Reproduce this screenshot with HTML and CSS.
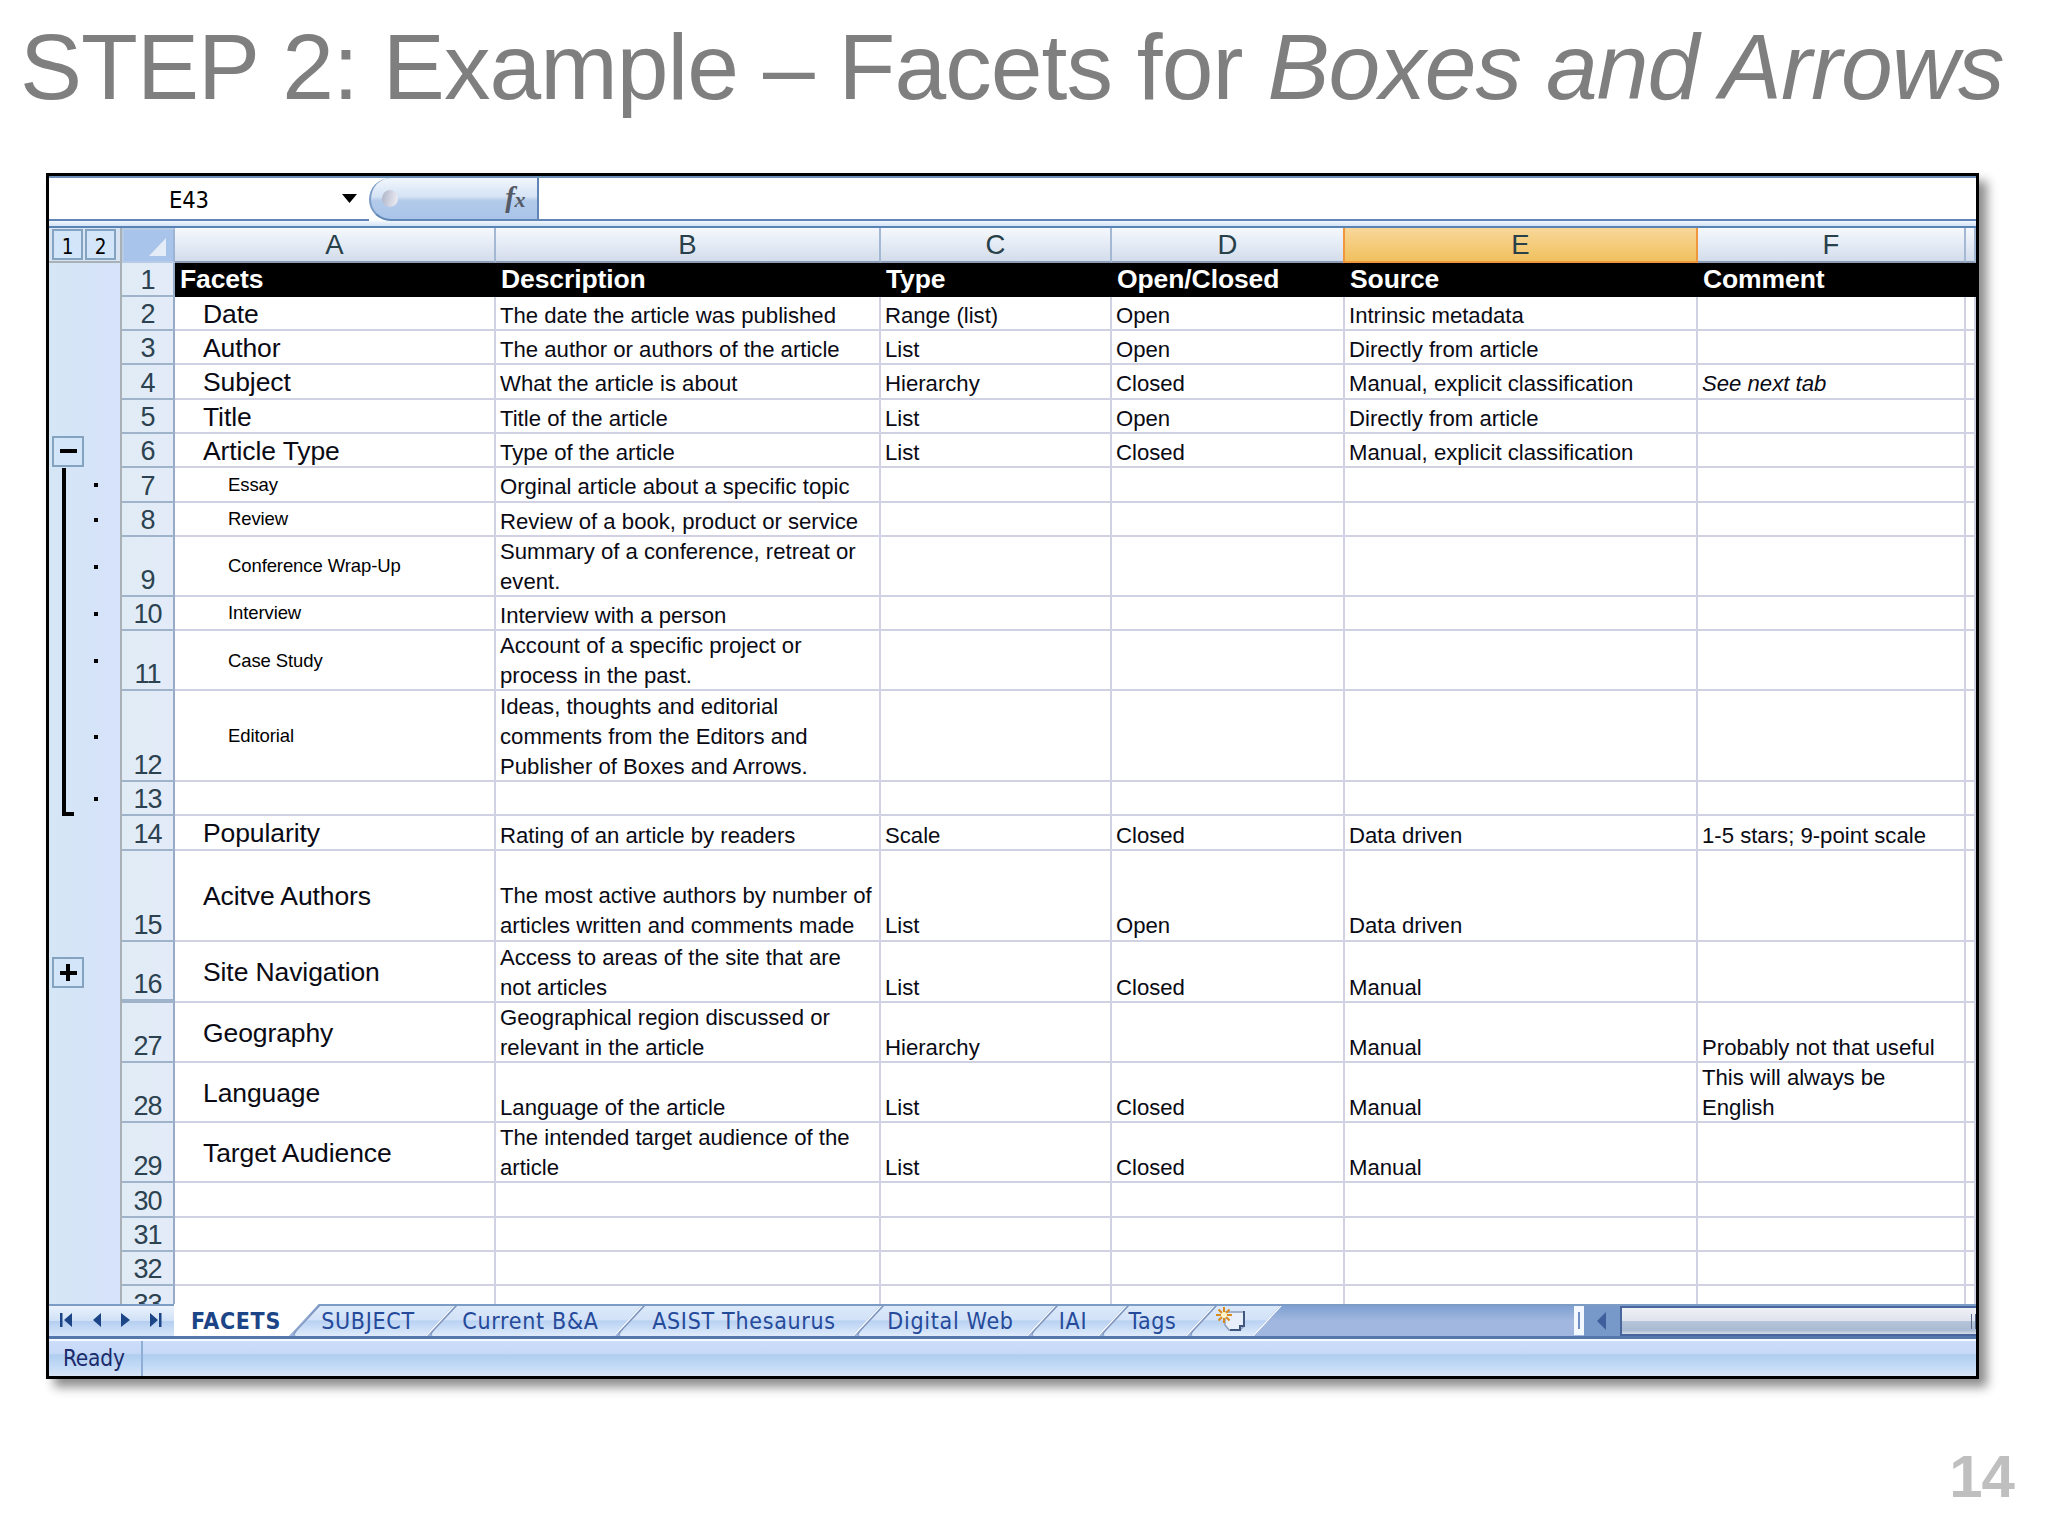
FILE: index.html
```html
<!DOCTYPE html>
<html lang="en">
<head>
    <meta charset="UTF-8">
    <title>STEP 2: Example – Facets for Boxes and Arrows</title>
    <link rel="stylesheet" href="styles.css">
</head>
<body>
    <h1>STEP 2: Example – Facets for <em>Boxes and Arrows</em></h1>

    <div class="window">
        <div class="formula-bar">
            <div class="name-box">
                <span class="cell-name">E43</span>
                <svg class="drop" width="15" height="9" viewBox="0 0 15 9"><path d="M0 0H15L7.5 9Z"/></svg>
            </div>
            <div class="fx-area">
                <span class="knob"></span>
                <span class="fx">f<small>x</small></span>
            </div>
            <div class="formula"></div>
        </div>

        <div class="sheet" id="sheet">
            <div class="row head">
                <div class="levels"><span class="box">1</span><span class="box">2</span></div>
                <div class="corner"><svg width="17" height="18" viewBox="0 0 17 18"><path d="M17 0V18H0Z" fill="#e4ecf8"/></svg></div>
                <div class="col">A</div>
                <div class="col">B</div>
                <div class="col">C</div>
                <div class="col">D</div>
                <div class="col selected">E</div>
                <div class="col">F</div>
                <div class="col"></div>
            </div>
            <!-- Rows will be dynamically added -->
        </div>

        <div class="tab-bar">
            <div class="nav">
                <svg width="125" height="30" viewBox="0 0 125 30" fill="#1c4587">
                    <path d="M11 7h2.500v14h-2.500zM23 7v14l-8-7zM52 7v14l-8-7zM72 7v14l9-7zM101 7v14l8-7zM110 7h2.500v14h-2.500z"/>
                </svg>
            </div>
            <div class="tab current t1"><span>FACETS</span></div>
            <div class="tab t2"><span>SUBJECT</span></div>
            <div class="tab t3"><span>Current B&amp;A</span></div>
            <div class="tab t4"><span>ASIST Thesaurus</span></div>
            <div class="tab t5"><span>Digital Web</span></div>
            <div class="tab t6"><span>IAI</span></div>
            <div class="tab t7"><span>Tags</span></div>
            <div class="tab t8">
                <svg width="32" height="28" viewBox="0 0 32 28">
                    <path d="M9 6H28V20L24 24H13L9 19Z" fill="#e8eefa" stroke="#8c9dbd" stroke-width="1.500"/>
                    <path d="M28 5V20H24V24H14" fill="none" stroke="#40577f" stroke-width="2"/>
                    <path d="M8 1V17M0 9H16M2.500 3.500L13.500 14.500M13.500 3.500L2.500 14.500" stroke="#d98a1c" stroke-width="2"/>
                    <circle cx="8" cy="9" r="3" fill="#fff3c8"/>
                </svg>
            </div>
            <div class="splitter"></div>
            <div class="scroll-left"><svg width="9" height="18" viewBox="0 0 9 18"><path d="M9 0V18L0 9Z" fill="#3f5f9c"/></svg></div>
            <div class="thumb"><i></i><i></i></div>
        </div>

        <div class="status"><span>Ready</span></div>
    </div>

    <div class="page-number">14</div>

    <script>
        // [row number, size, facet, description, type, open/closed, source, comment]
        const rows = [
            [1, 's', 'Facets', 'Description', 'Type', 'Open/Closed', 'Source', 'Comment'],
            [2, 's', 'Date', 'The date the article was published', 'Range (list)', 'Open', 'Intrinsic metadata', ''],
            [3, 's', 'Author', 'The author or authors of the article', 'List', 'Open', 'Directly from article', ''],
            [4, 's', 'Subject', 'What the article is about', 'Hierarchy', 'Closed', 'Manual, explicit classification', '<em>See next tab</em>'],
            [5, 's', 'Title', 'Title of the article', 'List', 'Open', 'Directly from article', ''],
            [6, 's', 'Article Type', 'Type of the article', 'List', 'Closed', 'Manual, explicit classification', ''],
            [7, 's', 'Essay', 'Orginal article about a specific topic', '', '', '', ''],
            [8, 's', 'Review', 'Review of a book, product or service', '', '', '', ''],
            [9, 'm', 'Conference Wrap-Up', 'Summary of a conference, retreat or<br>event.', '', '', '', ''],
            [10, 's', 'Interview', 'Interview with a person', '', '', '', ''],
            [11, 'm', 'Case Study', 'Account of a specific project or<br>process in the past.', '', '', '', ''],
            [12, 'l', 'Editorial', 'Ideas, thoughts and editorial<br>comments from the Editors and<br>Publisher of Boxes and Arrows.', '', '', '', ''],
            [13, 's', '', '', '', '', '', ''],
            [14, 's', 'Popularity', 'Rating of an article by readers', 'Scale', 'Closed', 'Data driven', '1-5 stars; 9-point scale'],
            [15, 'l', 'Acitve Authors', 'The most active authors by number of<br>articles written and comments made', 'List', 'Open', 'Data driven', ''],
            [16, 'm', 'Site Navigation', 'Access to areas of the site that are<br>not articles', 'List', 'Closed', 'Manual', ''],
            [27, 'm', 'Geography', 'Geographical region discussed or<br>relevant in the article', 'Hierarchy', '', 'Manual', 'Probably not that useful'],
            [28, 'm', 'Language', 'Language of the article', 'List', 'Closed', 'Manual', 'This will always be<br>English'],
            [29, 'm', 'Target Audience', 'The intended target audience of the<br>article', 'List', 'Closed', 'Manual', ''],
            [30, 's', '', '', '', '', '', ''],
            [31, 's', '', '', '', '', '', ''],
            [32, 's', '', '', '', '', '', ''],
            [33, 's', '', '', '', '', '', '']
        ];
        const sheet = document.getElementById('sheet');

        rows.forEach(([num, size, facet, ...cells]) => {
            const row = document.createElement('div');
            row.className = `row ${size}`;
            if (num === 1) row.classList.add('titles');
            if (num === 16) row.classList.add('before-hidden');

            // rows 7-13 are grouped under row 6
            const grouped = num >= 7 && num <= 13;
            if (grouped) row.classList.add('grouped');
            if (num === 13) row.classList.add('group-end');
            let mark = '';
            if (num === 6) mark = '<span class="box minus"></span>';
            if (num === 16) mark = '<span class="box minus plus"></span>';
            if (grouped) mark = '<span class="line"></span><span class="dot"></span>';

            row.innerHTML = `<div class="outline">${mark}</div><div class="num">${num}</div>` +
                `<div class="facet"><span>${facet}</span></div>` +
                cells.map(c => `<div class="cell"><span>${c}</span></div>`).join('') +
                '<div class="cell"></div>';
            sheet.appendChild(row);
        });
    </script>
</body>
</html>
```

FILE: styles.css
```css
:root {
    --u: 1.7155px;
    --grid: #d0d1e3;
}
* {
    box-sizing: border-box;
}
body {
    margin: 0;
    width: 2048px;
    height: 1536px;
    overflow: hidden;
    background-color: #fff;
    font-family: "Liberation Sans", Arial, sans-serif;
}
h1 {
    margin: 0;
    padding: 13px 0 0 20px;
    height: 173px;
    font-size: 93px;
    line-height: 108px;
    font-weight: normal;
    letter-spacing: -0.950px;
    color: #7f7f7f;
    white-space: nowrap;
}
.window {
    display: flex;
    flex-direction: column;
    width: 1933px;
    height: 1206px;
    margin-left: 46px;
    border: 3px solid #000;
    background-color: #d9e6f6;
    box-shadow: 8px 8px 10px rgba(0, 0, 0, 0.45);
    overflow: hidden;
}

/* formula bar */
.formula-bar {
    display: flex;
    height: 52px;
    flex: none;
    border-top: 2px solid #6a8fb8;
    border-bottom: 2px solid #5a83b5;
    background: linear-gradient(#fff 42px, #f0f6fd 43px, #d3e3f7);
}
.name-box, .fx-area, .formula {
    height: 43px;
    background-color: #fff;
    border-bottom: 2px solid #5f86b6;
}
.name-box {
    display: flex;
    align-items: center;
    width: 320px;
    padding-left: 120px;
    font: 23.500px "DejaVu Sans Condensed", "DejaVu Sans", sans-serif;
}
.cell-name {
    width: 173px;
    padding-top: 2px;
    letter-spacing: -0.200px;
}
.fx-area {
    display: flex;
    align-items: center;
    justify-content: space-between;
    width: 170px;
    padding: 0 12px 0 11px;
    background: linear-gradient(#f2f7fd, #d5e3f5 45%, #b4cbea 55%, #a9c4e9);
    border-left: 2px solid #7b9cc6;
    border-right: 2px solid #5f86b6;
    border-radius: 22px 0 0 22px;
}
.knob {
    width: 16px;
    height: 17px;
    border-radius: 50%;
    background: linear-gradient(100deg, #aeb3c8, #f0f0f6);
}
.fx {
    font: italic bold 29px/30px "Liberation Serif", serif;
    color: #555b66;
    letter-spacing: -0.500px;
}
.fx small {
    font-size: 22px;
}
.formula {
    flex: 1;
}

/* sheet */
.sheet {
    height: 1076px;
    flex: none;
    overflow: hidden;
    background-color: #fff;
}
.row {
    display: grid;
    grid-template-columns: 73px 53px 321px 385px 231px 233px 353px 268px 1fr;
    grid-template-rows: 100%;
    height: calc(20 * var(--u));
    font-size: 22.150px;
    line-height: 30.200px;
    color: #0a0a14;
    white-space: nowrap;
}
.row.m {
    height: calc(35 * var(--u));
}
.row.l {
    height: calc(53 * var(--u));
}
.row.before-hidden {
    height: calc(36 * var(--u));
}
.row.head {
    height: 34.500px;
    font-size: 27.500px;
    line-height: 33px;
    color: #27404a;
}
.col {
    text-align: center;
    background: linear-gradient(#f5f8fc, #e4ebf5 50%, #d3dcea);
    border-right: 2px solid #a3b8d2;
    border-bottom: 2px solid #8d9db5;
}
.col.selected {
    background: linear-gradient(#f8d799, #f1c15f);
    border-color: #f0963c;
    box-shadow: -2px 0 #f0963c;
}
.levels {
    display: flex;
    gap: 2px;
    padding: 1px 0 0 3px;
    background-color: #d9e4f3;
    border-right: 2px solid #a9b0b6;
    border-bottom: 2px solid #a9b0b6;
}
.box {
    width: 31px;
    height: 31px;
    border: 2px solid #83a3c0;
    background-color: #d3e5f8;
    color: #000;
    font: 20.500px/33px "DejaVu Sans Condensed", "DejaVu Sans", sans-serif;
    text-align: center;
}
.corner {
    display: flex;
    justify-content: flex-end;
    align-items: flex-end;
    padding: 0 7px 5px 0;
    background-color: #a9c4eb;
    border: 2px solid #b7cae6;
    border-right-color: #9db4d4;
}
.outline {
    display: flex;
    align-items: center;
    padding-left: 3px;
    background: linear-gradient(90deg, #d5e6f5, #d6e2fa);
    border-right: 2px solid #a9b0b6;
}
.minus {
    flex: none;
    display: flex;
    align-items: center;
    justify-content: center;
    width: 32px;
}
.minus::before {
    content: "";
    width: 17px;
    height: 4px;
    background-color: #000;
}
.plus::after {
    content: "";
    width: 4px;
    height: 17px;
    margin: 0 6.500px 0 -10.500px;
    background-color: #000;
}
.line {
    align-self: stretch;
    width: 12px;
    margin-left: 10px;
    border-left: 4px solid #000;
}
.group-end .line {
    border-bottom: 4px solid #000;
}
.dot {
    width: 4px;
    height: 4px;
    margin-left: 20px;
    background-color: #000;
}
.num {
    display: flex;
    justify-content: center;
    align-items: flex-end;
    font-size: 27px;
    line-height: 30px;
    color: #2c4250;
    background: linear-gradient(90deg, #e0ecf5, #e3ebf8);
    border-right: 2px solid #98abc6;
    border-bottom: 2px solid #9fb3ca;
    letter-spacing: -1px;
}
.before-hidden .num {
    border-bottom-width: 4px;
}
.facet, .cell {
    display: flex;
    align-items: flex-end;
    padding-left: 4px;
    border-right: 2px solid var(--grid);
    border-bottom: 2px solid var(--grid);
}
.cell span {
    margin-bottom: -2px;
}
.facet {
    align-items: center;
    padding: 2px 0 0 28px;
    font-size: 26.500px;
    letter-spacing: -0.100px;
}
.grouped .facet {
    padding: 1px 0 0 53px;
    font-size: 18.500px;
    color: #000;
}
.titles .facet, .titles .cell {
    align-items: center;
    padding: 1px 0 0 5px;
    font-size: 26.500px;
    font-weight: bold;
    letter-spacing: -0.100px;
    color: #fff;
    background-color: #000;
    border-color: #000;
}
.titles .cell span {
    margin-bottom: 0;
}

/* sheet tabs */
.tab-bar {
    display: flex;
    height: 35px;
    flex: none;
    padding-bottom: 3px;
    border-top: 2px solid #7d9cc5;
    border-bottom: 3px solid #5577ab;
    background: linear-gradient(#7fa1d2, #a1b7df 50%, #a1b7df);
    font: 23px/29px "DejaVu Sans Condensed", "DejaVu Sans", sans-serif;
    letter-spacing: 0.700px;
    color: #254a9a;
}
.nav {
    width: 125px;
    height: 30px;
    background: linear-gradient(#eaf2fc, #cfe0f6 50%, #b5cef0 50%, #d5e5f9);
}
.tab {
    position: relative;
    z-index: 1;
    height: 30px;
    padding: 1px 9px 0 0;
    text-align: center;
    white-space: nowrap;
}
.tab::before {
    content: "";
    position: absolute;
    z-index: -1;
    inset: 0;
    background: linear-gradient(#dce9fa, #d3e2f8 45%, #b9d2f3 50%, #dfebfa);
    border-right: 2px solid #fff;
    border-left: 2px solid #8296bb;
    border-bottom-left-radius: 6px;
    transform: skewX(-43deg);
}
.tab.current {
    margin-top: -2px;
    height: 32px;
    padding: 3px 6px 0 0;
    background: linear-gradient(90deg, #fff 80%, transparent 80%);
    font-weight: bold;
    color: #1c4587;
}
.tab.current::before {
    left: 16px;
    background: #fff;
    border-left: none;
}
.t1 { width: 130px; }
.t2 { width: 137px; }
.t3 { width: 188px; }
.t4 { width: 239px; }
.t5 { width: 174px; }
.t6 { width: 71px; }
.t7 { width: 88px; }
.t8 { width: 67px; }
.tab.t8 {
    padding: 0 5px 0 0;
}
.splitter {
    width: 10px;
    height: 29px;
    margin-left: 306px;
    background-color: #6f8fc4;
    border: solid #f4f9ff;
    border-width: 6px 4px;
}
.scroll-left {
    display: flex;
    align-items: center;
    width: 36px;
    height: 30px;
    padding-left: 13px;
    background-color: #7799ca;
}
.thumb {
    display: flex;
    flex: 1;
    justify-content: flex-end;
    align-items: center;
    gap: 3px;
    height: 30px;
    border: 2px solid #48669b;
    border-right: none;
    background: linear-gradient(#eef0f5, #dfe3ec 50%, #b4c5da 52%, #a9bad2 85%, #d5deea);
}
.thumb i {
    width: 1px;
    height: 15px;
    background-color: #56688a;
}

/* status bar */
.status {
    flex: 1;
    border-top: 2px solid #f4f8ff;
    background: linear-gradient(#cdddfa, #c5d9f6 35%, #b0cdef 37%, #c0d9f6 65%, #dce7f5);
    font: 22.500px/35px "DejaVu Sans Condensed", "DejaVu Sans", sans-serif;
    color: #1b2a6b;
}
.status span {
    display: inline-block;
    width: 94px;
    height: 37px;
    padding-left: 14px;
    letter-spacing: -0.200px;
    border-right: 2px solid #8faed6;
}
.page-number {
    padding: 62px 34px 0 0;
    font-size: 60px;
    line-height: 71px;
    font-weight: bold;
    text-align: right;
    letter-spacing: -1px;
    color: #bfbfbf;
}
```
